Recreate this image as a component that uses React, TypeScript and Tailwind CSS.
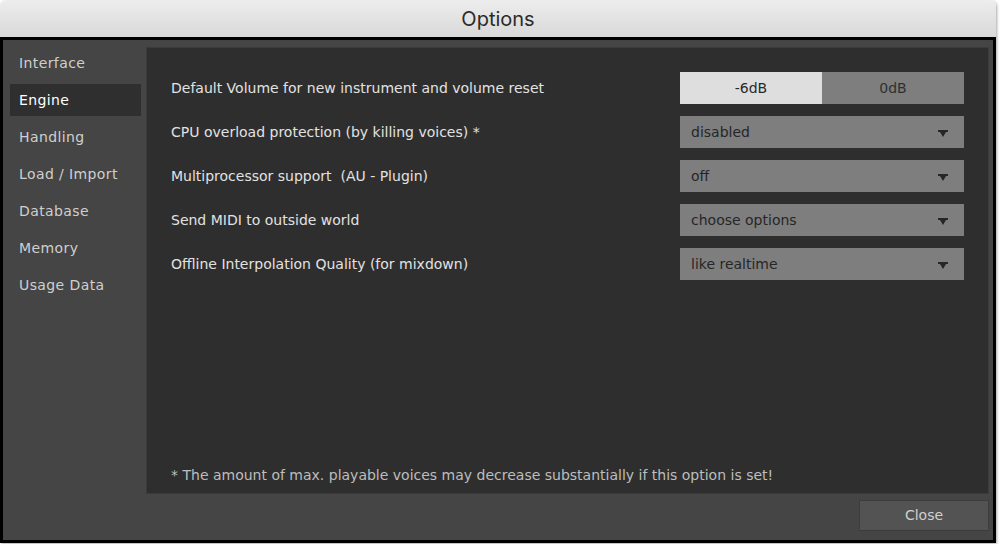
import { ReactNode } from "react"

const menu = ["Interface", "Engine", "Handling", "Load / Import", "Database", "Memory", "Usage Data"]

const rows = [
  { label: "Default Volume for new instrument and volume reset", kind: "toggle" },
  { label: "CPU overload protection (by killing voices) *", value: "disabled" },
  { label: "Multiprocessor support  (AU - Plugin)", value: "off" },
  { label: "Send MIDI to outside world", value: "choose options" },
  { label: "Offline Interpolation Quality (for mixdown)", value: "like realtime" },
]

const pixelFont = "font-['DejaVu_Sans',sans-serif]"

function Dropdown({ value }: { value: string }) {
  return (
    <div className="flex h-[32px] w-[284px] items-center justify-between bg-[#7e7e7e] pl-[11px] pr-[16px] text-[14px] text-[#262626]">
      <span className="whitespace-pre">{value}</span>
      <svg width="10" height="7" viewBox="0 0 10 7" className="mt-[2px]">
        <path d="M0 0H10V2H8L5 7L2 2H0Z" fill="#262626" />
      </svg>
    </div>
  )
}

function Toggle() {
  return (
    <div className="flex h-[32px] w-[284px] text-[14px] text-[#2a2a2a]">
      <div className="flex w-[142px] items-center justify-center bg-[#dedede]">-6dB</div>
      <div className="flex w-[142px] items-center justify-center bg-[#7e7e7e] text-[#2f2f2f]">0dB</div>
    </div>
  )
}

function Row({ label, children }: { label: string; children: ReactNode }) {
  return (
    <div className="flex h-[32px] items-center justify-between">
      <span className="whitespace-pre text-[14px] text-[#e2e2e2]">{label}</span>
      {children}
    </div>
  )
}

export default function App() {
  return (
    <div className={`h-[544px] w-[1000px] overflow-hidden bg-white ${pixelFont}`}>
      <div className="flex h-[543px] w-[996px] flex-col overflow-hidden rounded-t-[6px] shadow-[1px_1px_3px_rgba(0,0,0,0.35)]">
        <div className="flex h-[40px] shrink-0 items-center justify-center border-b-[3px] border-black bg-gradient-to-b from-[#ededed] to-[#d9d9d9] pt-[1px]">
          <span className="font-['Inter',sans-serif] text-[20px] text-[#2b2b2b]">Options</span>
        </div>

        <div className="flex flex-1 flex-col border-x-[3px] border-b-[3px] border-black bg-[#454545]">
          <div className="flex pl-[7px] pr-[4px] pt-[7px]">
            <nav className="flex w-[131px] flex-col gap-[5px]">
              {menu.map((item) => (
                <div
                  key={item}
                  className={`flex h-[32px] items-center pl-[9px] text-[14px] tracking-[0.4px] ${
                    item === "Engine" ? "bg-[#2f2f2f] text-white" : "text-[#cfcfcf]"
                  }`}
                >
                  {item}
                </div>
              ))}
            </nav>

            <section className="ml-[5px] flex h-[447px] w-[843px] flex-col border border-[#3b3b3b] bg-[#2e2e2e] px-[24px] pb-[7px] pt-[24px]">
              <div className="flex flex-col gap-[12px]">
                {rows.map((row) => (
                  <Row key={row.label} label={row.label}>
                    {row.kind === "toggle" ? <Toggle /> : <Dropdown value={row.value ?? ""} />}
                  </Row>
                ))}
              </div>
              <p className="mt-auto text-[14px] text-[#bdbdbd]">
                * The amount of max. playable voices may decrease substantially if this option is set!
              </p>
            </section>
          </div>

          <div className="flex justify-end pr-[4px] pt-[6px]">
            <button className="flex h-[31px] w-[130px] items-center justify-center border border-[#3c3c3c] bg-[#535353] text-[14px] text-[#d0d0d0]">
              Close
            </button>
          </div>
        </div>
      </div>
    </div>
  )
}
